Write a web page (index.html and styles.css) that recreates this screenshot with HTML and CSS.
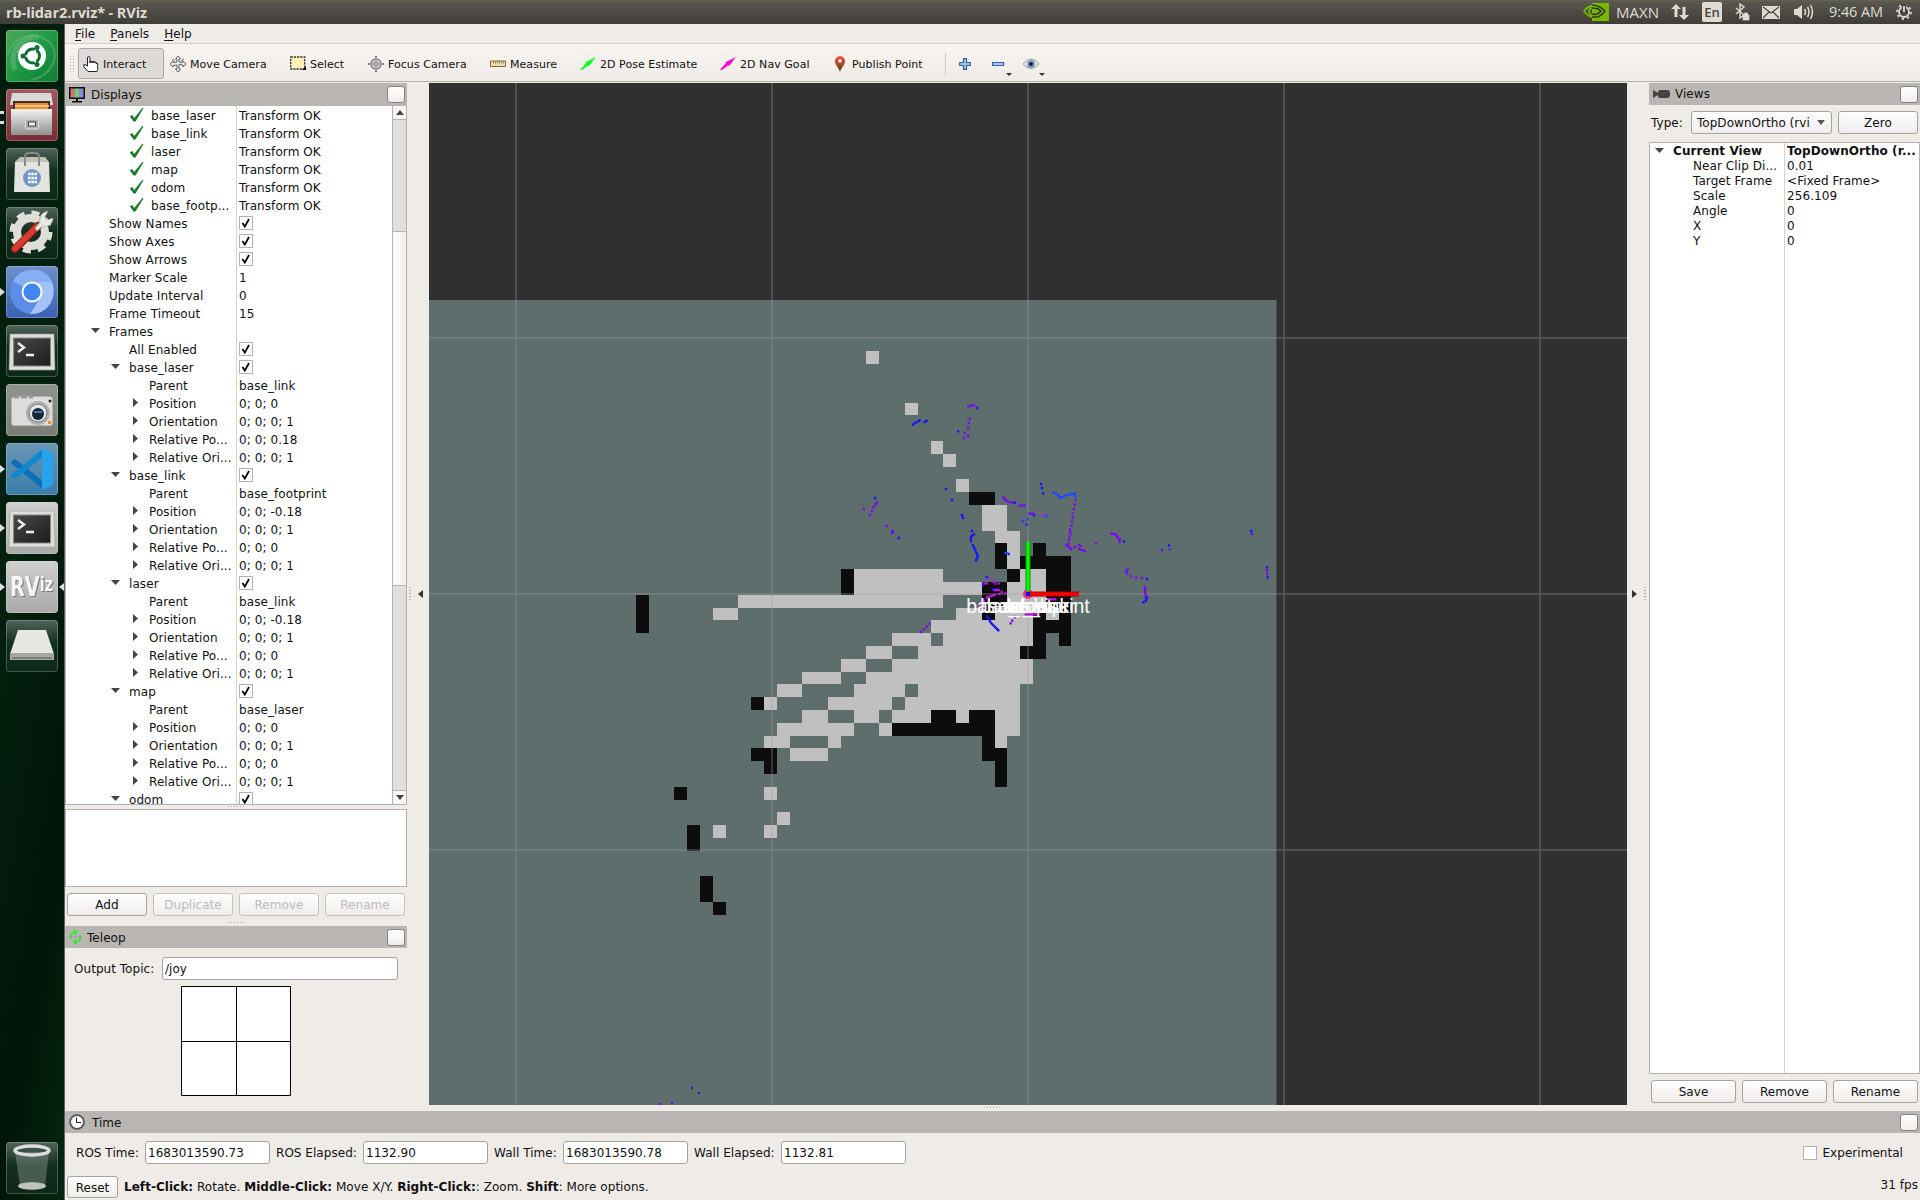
FILE: index.html
```html
<!DOCTYPE html>
<html lang="en">
<head>
<meta charset="utf-8">
<title>rb-lidar2.rviz* - RViz</title>
<link rel="stylesheet" href="styles.css">
</head>
<body>
<svg class="defs" width="0" height="0">
  <defs>
    <linearGradient id="silver" x1="0" y1="0" x2="0" y2="1"><stop offset="0" stop-color="#f2f2f0"/><stop offset="1" stop-color="#8f8f8d"/></linearGradient>
    <linearGradient id="screen" x1="0" y1="0" x2="1" y2="1"><stop offset="0" stop-color="#4a4a4a"/><stop offset="1" stop-color="#1c1c1c"/></linearGradient>
    <linearGradient id="pin" x1="0" y1="0" x2="0" y2="1"><stop offset="0" stop-color="#f0563a"/><stop offset="1" stop-color="#5a3a10"/></linearGradient>
    <symbol id="ck" viewBox="0 0 14 14"><rect x=".5" y=".5" width="13" height="13" fill="#fff" stroke="#b5b2ae"/><path d="M3.400 7l2.400 3.600L10 3" fill="none" stroke="#000" stroke-width="1.800"/></symbol>
    <symbol id="ok" viewBox="0 0 14 14"><path d="M.3 8.200l2.400-1.200 2 3L12.800 0 14 .3 6 13.500H4z" fill="#1c7a2a"/></symbol>
    <symbol id="dn" viewBox="0 0 10 6"><path d="M0 0h9L4.500 5z" fill="#444"/></symbol>
    <symbol id="rt" viewBox="0 0 6 10"><path d="M0 0l5 4.500L0 9z" fill="#444"/></symbol>
    <symbol id="term" viewBox="0 0 52 52"><path d="M4 9h44l1 36H3z" fill="#dcdcda" stroke="#9a9a98" stroke-width=".6"/><rect x="7.500" y="13" width="37" height="28" fill="url(#screen)" stroke="#888"/><path d="M12 18l6 4.500-6 4.500M20 30h8" fill="none" stroke="#eee" stroke-width="2.400"/></symbol>
  </defs>
</svg>

<header class="topbar">
  <span class="title">rb-lidar2.rviz* - RViz</span>
  <div class="tray">
    <svg class="nv" width="27" height="18" viewBox="0 0 27 18"><path d="M9 0h17v18H9z" fill="#76b900"/><path d="M1 8c5-7 15-7 20 0-5 8-15 8-20 0z" fill="none" stroke="#76b900" stroke-width="1.800"/><path d="M9 2c6 0 10 3 13 6-5 7-9 6-13 6M9 5c4 0 7 1 9 3-3 4-6 4-9 3" fill="none" stroke="#34381f" stroke-width="1.600"/><path d="M9 5C5 6 5 10 9 13M9 8c2-1 4 1 4 2" fill="none" stroke="#76b900" stroke-width="1.600"/></svg>
    <span class="maxn">MAXN</span>
    <svg class="net" width="18" height="16" viewBox="0 0 18 16"><path d="M5 0l5 5H6.500v8h-3V5H0zM13 16l-5-5h3.500V3h3v8H18z" fill="#dfdbd2"/></svg>
    <span class="en">En</span>
    <svg class="bt" width="15" height="18" viewBox="0 0 15 18"><path d="M1 5l8 7-4 3V1l4 3-8 7" fill="none" stroke="#dfdbd2" stroke-width="1.400"/><path d="M8 12h6v5H8zM9.500 12v-2h3v2" fill="#dfdbd2" stroke="#dfdbd2" stroke-width=".8"/></svg>
    <svg class="mail" width="18" height="13" viewBox="0 0 18 13"><path d="M0 0h18v13H0z" fill="#dfdbd2"/><path d="M1 1l8 6 8-6M1 12l6-6M17 12l-6-6" fill="none" stroke="#46443e" stroke-width="1.200"/></svg>
    <svg class="vol" width="20" height="16" viewBox="0 0 20 16"><path d="M0 5h3l5-4v14l-5-4H0z" fill="#dfdbd2"/><path d="M10.500 5q2 3 0 6M13.500 3q3 5 0 10M16.500 1q4 7 0 14" fill="none" stroke="#dfdbd2" stroke-width="1.500"/></svg>
    <span class="clock">9:46 AM</span>
    <svg class="gear" width="16" height="16" viewBox="0 0 16 16"><circle cx="8" cy="8" r="5" fill="none" stroke="#dfdbd2" stroke-width="1.800"/><circle cx="8" cy="8" r="7" fill="none" stroke="#dfdbd2" stroke-width="1.800" stroke-dasharray="2.200 3.300"/><path d="M8 0v8" stroke="#46443e" stroke-width="4"/><path d="M8 2v6" stroke="#dfdbd2" stroke-width="1.800"/></svg>
  </div>
</header>

<div class="desktop">
<nav class="launcher">
  <div class="tile green"><svg viewBox="0 0 52 52"><path d="M2 24C8 5 30 0 43 12s3 34-18 38" fill="none" stroke="#69bb77" stroke-width="2" opacity=".5"/><path d="M9 40C2 20 16 6 33 7" fill="none" stroke="#79c486" stroke-width="5" opacity=".4"/><circle cx="26" cy="26" r="14" fill="#fff"/><circle cx="26.500" cy="26" r="7" fill="none" stroke="#0c6e31" stroke-width="3"/><path d="M26 26L13 26M26 26l7-12M26 26l7 12" stroke="#fff" stroke-width="1.500"/><g fill="#0c6e31"><circle cx="17" cy="26" r="2.500"/><circle cx="31" cy="17.500" r="2.500"/><circle cx="31" cy="34.500" r="2.500"/></g></svg></div>
  <div class="tile red run2"><svg viewBox="0 0 52 52"><path d="M6 4h39l2 12H4z" fill="#d8d8d6"/><path d="M7 12h37v9H7z" fill="#403028"/><path d="M9 14h33v6H9z" fill="#f08a35"/><path d="M9 16h34v2H9z" fill="#fbc27b"/><path d="M5 20h41v26H5z" fill="url(#silver)"/><rect x="19.500" y="30" width="13" height="10" rx="2" fill="#aaa" stroke="#ddd"/><rect x="22.500" y="33" width="7" height="4" fill="#eee" stroke="#444"/></svg></div>
  <div class="tile dark"><svg viewBox="0 0 52 52"><path d="M9 14h34l1 30H8z" fill="#e4e4de"/><path d="M9 14l5-5h25l4 5z" fill="#c2c2bc"/><path d="M19 18V9q0-4 4-4h6q4 0 4 4v9" fill="none" stroke="#8b8b88" stroke-width="2"/><circle cx="26" cy="30" r="9" fill="#7298c9"/><path d="M22 26h9M22 30h9M22 34h9" stroke="#fff" stroke-width="2.500" stroke-dasharray="2.500 .8"/></svg></div>
  <div class="tile dark"><svg viewBox="0 0 52 52"><circle cx="25" cy="25" r="14" fill="none" stroke="#deded9" stroke-width="8"/><circle cx="25" cy="25" r="19" fill="none" stroke="#deded9" stroke-width="5" stroke-dasharray="8 6.900"/><path d="M9 42L32 19" stroke="#8a1e18" stroke-width="8" stroke-linecap="round"/><path d="M9 41.500L31 19.500" stroke="#d83b31" stroke-width="6" stroke-linecap="round"/><path d="M29 21l5-6c-1-7 3-10 8-11l-3 6 2 3 6-2c0 6-5 9-10 8l-6 5z" fill="#e8e8e4" stroke="#999" stroke-width=".6"/></svg></div>
  <div class="tile blue run"><svg viewBox="0 0 52 52"><circle cx="26" cy="26" r="22" fill="#5c8de8"/><path d="M26 26L7 15C16-1 40 0 46 16z" fill="#86aef5"/><path d="M26 16h20c6 16-5 33-22 32l12-19z" fill="#a5c2f7"/><circle cx="26" cy="26" r="10.500" fill="#fff"/><circle cx="26" cy="26" r="8.500" fill="#4285f4"/></svg></div>
  <div class="tile dark"><svg><use href="#term"/></svg></div>
  <div class="tile olive"><svg viewBox="0 0 52 52"><rect x="5" y="12" width="42" height="30" rx="3" fill="#dedddb" stroke="#888"/><path d="M7 13h20" stroke="#999" stroke-width="3" stroke-dasharray="6 2"/><circle cx="32" cy="29" r="12" fill="#b2b1ae"/><circle cx="32" cy="29" r="9" fill="#e3e3e3" stroke="#777"/><circle cx="32" cy="30" r="6" fill="#14263c"/><path d="M28 28h8" stroke="#48719d" stroke-width="2"/><path d="M42 37h3v3h-3z" fill="#f28c1c"/><circle cx="44" cy="17" r="1.500" fill="#222"/></svg></div>
  <div class="tile azure run"><svg viewBox="0 0 52 52"><path d="M5 19l4-3 29 23v8L5 20z" fill="#0a6eb9"/><path d="M5 33l4 3 29-23V5L5 32z" fill="#1385d1"/><path d="M36 5l11 5v32l-11 5z" fill="#27a3ee"/></svg></div>
  <div class="tile light run"><svg><use href="#term"/></svg></div>
  <div class="tile light run active"><svg viewBox="0 0 52 52"><text class="rviz-logo" x="4" y="35" textLength="43" lengthAdjust="spacingAndGlyphs"><tspan class="big">RV</tspan><tspan dy="-5">iz</tspan></text></svg></div>
  <div class="tile dark"><svg viewBox="0 0 52 52"><path d="M12 10h28l8 24H4z" fill="#e6e6e3"/><path d="M4 33h44v7H4z" fill="#a6a6a3"/><path d="M6 38h40" stroke="#555"/></svg></div>
  <div class="tile dark trash"><svg viewBox="0 0 52 52"><path d="M9 10l5 34q12 7 25 0l4-34z" fill="#aab5ac" opacity=".35"/><ellipse cx="26" cy="44" rx="14" ry="3.800" fill="#bfc2bf"/><ellipse cx="26" cy="8.500" rx="17" ry="4.500" fill="none" stroke="#dadcda" stroke-width="3.500"/></svg></div>
</nav>

<main class="window">
  <div class="menubar"><span><u>F</u>ile</span><span><u>P</u>anels</span><span><u>H</u>elp</span></div>
  <div class="toolbar">
    <i class="grip"></i>
    <div class="tool on"><svg viewBox="0 0 16 16"><path d="M4.500 10V2q0-1.500 1.200-1.500T7 2v5V5.500h2V7 5.500h2V7 6h2v1.500h1.700v5q0 2-.7 3H5L1 11q-1-3 1-2.500z" fill="#fff" stroke="#222"/></svg>Interact</div>
    <div class="tool t2"><svg viewBox="0 0 16 16"><path d="M8 0l2.500 3H9v3l4 .500V5l3 3-3 3V9l-4-.500V13h1.500L8 16l-2.500-3H7V9l-4 .500V11L0 8l3-3v1.500L7 6V3H5.500zM2 3l3 2M14 3l-3 2" fill="#eee" stroke="#555" stroke-width=".9"/></svg>Move Camera</div>
    <div class="tool t3"><svg viewBox="0 0 16 16"><rect x=".7" y="1" width="14" height="12" fill="#fff2b8" stroke="#333" stroke-width="1.300" stroke-dasharray="2.200 1"/><path d="M16 10v4h-4z"/></svg>Select</div>
    <div class="tool t4"><svg viewBox="0 0 16 16"><g fill="none" stroke="#777"><circle cx="8" cy="8" r="5" stroke-width="1.400"/><circle cx="8" cy="8" r="2.500"/><path d="M8 0v16M0 8h16" stroke-width="2"/></g><path d="M8 1v14M1 8h14" stroke="#eee" stroke-width=".7"/></svg>Focus Camera</div>
    <div class="tool t5"><svg viewBox="0 0 16 16"><path d="M.5 5h15v5.500H.5z" fill="#f2dfa0" stroke="#746a50"/><path d="M3.500 5.500v2M5.500 5.500v2M7.500 5.500v2M9.500 5.500v2M11.500 5.500v2M13.500 5.500v2" stroke="#746a50" stroke-width=".8"/></svg>Measure</div>
    <div class="tool t6"><svg viewBox="0 0 16 16"><path d="M0 14l6-7-1-.5L16 1 9 10l-1-.5L2 14z" fill="#0f2"/></svg>2D Pose Estimate</div>
    <div class="tool t7"><svg viewBox="0 0 16 16"><path d="M0 14l6-7-1-.5L16 1 9 10l-1-.5L2 14z" fill="#f0d"/></svg>2D Nav Goal</div>
    <div class="tool t8"><svg viewBox="0 0 16 16"><path d="M8 0a5 5 0 0 1 5 5.500C13 9 9 12 8 16 7 12 3 9 3 5.500A5 5 0 0 1 8 0z" fill="url(#pin)"/><circle cx="8" cy="5" r="1.700" fill="#fff"/></svg>Publish Point</div>
    <i class="sep"></i>
    <svg class="plus" width="12" height="12" viewBox="0 0 12 12"><path d="M4.500.7h3v3.800h3.800v3H7.500v3.800h-3V7.500H.7v-3h3.800z" fill="#a9c6ea" stroke="#2f63ab" stroke-width="1.200"/></svg>
    <svg class="minus" width="21" height="24" viewBox="0 0 21 24"><path d="M.6 9.500h11v3H.6z" fill="#a9c6ea" stroke="#2f63ab" stroke-width="1.200"/><path d="M14 20h6l-3 3z" fill="#333"/></svg>
    <svg class="eye" width="23" height="24" viewBox="0 0 23 24"><path d="M0 11q8-10 16 0-8 9-16 0z" fill="#ebe8e8" stroke="#999"/><circle cx="8" cy="11" r="3.800" fill="#6f87c8"/><circle cx="8" cy="11" r="1.700" fill="#111"/><path d="M16 20h6l-3 3z" fill="#333"/></svg>
  </div>

  <div class="middle">
    <section class="dock left">
      <div class="head"><svg width="16" height="16" viewBox="0 0 16 16"><path d="M0 0h16v12H0z" fill="#111"/><path d="M1.500 1.500h4.500v9H1.500z" fill="#c77"/><path d="M6 1.500h4v9H6z" fill="#7c7"/><path d="M10 1.500h4.500v9H10z" fill="#88d"/><path d="M7 12h2v2h4v1.500H3V14h4z" fill="#111"/></svg><b>Displays</b><i class="float"></i></div>
      <div class="treebox">
        <div class="tree">
          <div class="row d4"><span class="k"><svg class="st"><use href="#ok"/></svg>base_laser</span><span class="v">Transform OK</span></div>
          <div class="row d4"><span class="k"><svg class="st"><use href="#ok"/></svg>base_link</span><span class="v">Transform OK</span></div>
          <div class="row d4"><span class="k"><svg class="st"><use href="#ok"/></svg>laser</span><span class="v">Transform OK</span></div>
          <div class="row d4"><span class="k"><svg class="st"><use href="#ok"/></svg>map</span><span class="v">Transform OK</span></div>
          <div class="row d4"><span class="k"><svg class="st"><use href="#ok"/></svg>odom</span><span class="v">Transform OK</span></div>
          <div class="row d4"><span class="k"><svg class="st"><use href="#ok"/></svg>base_footp...</span><span class="v">Transform OK</span></div>
          <div class="row d1"><span class="k">Show Names</span><span class="v"><svg class="cb"><use href="#ck"/></svg></span></div>
          <div class="row d1"><span class="k">Show Axes</span><span class="v"><svg class="cb"><use href="#ck"/></svg></span></div>
          <div class="row d1"><span class="k">Show Arrows</span><span class="v"><svg class="cb"><use href="#ck"/></svg></span></div>
          <div class="row d1"><span class="k">Marker Scale</span><span class="v">1</span></div>
          <div class="row d1"><span class="k">Update Interval</span><span class="v">0</span></div>
          <div class="row d1"><span class="k">Frame Timeout</span><span class="v">15</span></div>
          <div class="row d1"><span class="k"><svg class="dn"><use href="#dn"/></svg>Frames</span><span class="v"></span></div>
          <div class="row d2"><span class="k">All Enabled</span><span class="v"><svg class="cb"><use href="#ck"/></svg></span></div>
          <div class="row d2"><span class="k"><svg class="dn"><use href="#dn"/></svg>base_laser</span><span class="v"><svg class="cb"><use href="#ck"/></svg></span></div>
          <div class="row d3"><span class="k">Parent</span><span class="v">base_link</span></div>
          <div class="row d3"><span class="k"><svg class="rt"><use href="#rt"/></svg>Position</span><span class="v">0; 0; 0</span></div>
          <div class="row d3"><span class="k"><svg class="rt"><use href="#rt"/></svg>Orientation</span><span class="v">0; 0; 0; 1</span></div>
          <div class="row d3"><span class="k"><svg class="rt"><use href="#rt"/></svg>Relative Po...</span><span class="v">0; 0; 0.18</span></div>
          <div class="row d3"><span class="k"><svg class="rt"><use href="#rt"/></svg>Relative Ori...</span><span class="v">0; 0; 0; 1</span></div>
          <div class="row d2"><span class="k"><svg class="dn"><use href="#dn"/></svg>base_link</span><span class="v"><svg class="cb"><use href="#ck"/></svg></span></div>
          <div class="row d3"><span class="k">Parent</span><span class="v">base_footprint</span></div>
          <div class="row d3"><span class="k"><svg class="rt"><use href="#rt"/></svg>Position</span><span class="v">0; 0; -0.18</span></div>
          <div class="row d3"><span class="k"><svg class="rt"><use href="#rt"/></svg>Orientation</span><span class="v">0; 0; 0; 1</span></div>
          <div class="row d3"><span class="k"><svg class="rt"><use href="#rt"/></svg>Relative Po...</span><span class="v">0; 0; 0</span></div>
          <div class="row d3"><span class="k"><svg class="rt"><use href="#rt"/></svg>Relative Ori...</span><span class="v">0; 0; 0; 1</span></div>
          <div class="row d2"><span class="k"><svg class="dn"><use href="#dn"/></svg>laser</span><span class="v"><svg class="cb"><use href="#ck"/></svg></span></div>
          <div class="row d3"><span class="k">Parent</span><span class="v">base_link</span></div>
          <div class="row d3"><span class="k"><svg class="rt"><use href="#rt"/></svg>Position</span><span class="v">0; 0; -0.18</span></div>
          <div class="row d3"><span class="k"><svg class="rt"><use href="#rt"/></svg>Orientation</span><span class="v">0; 0; 0; 1</span></div>
          <div class="row d3"><span class="k"><svg class="rt"><use href="#rt"/></svg>Relative Po...</span><span class="v">0; 0; 0</span></div>
          <div class="row d3"><span class="k"><svg class="rt"><use href="#rt"/></svg>Relative Ori...</span><span class="v">0; 0; 0; 1</span></div>
          <div class="row d2"><span class="k"><svg class="dn"><use href="#dn"/></svg>map</span><span class="v"><svg class="cb"><use href="#ck"/></svg></span></div>
          <div class="row d3"><span class="k">Parent</span><span class="v">base_laser</span></div>
          <div class="row d3"><span class="k"><svg class="rt"><use href="#rt"/></svg>Position</span><span class="v">0; 0; 0</span></div>
          <div class="row d3"><span class="k"><svg class="rt"><use href="#rt"/></svg>Orientation</span><span class="v">0; 0; 0; 1</span></div>
          <div class="row d3"><span class="k"><svg class="rt"><use href="#rt"/></svg>Relative Po...</span><span class="v">0; 0; 0</span></div>
          <div class="row d3"><span class="k"><svg class="rt"><use href="#rt"/></svg>Relative Ori...</span><span class="v">0; 0; 0; 1</span></div>
          <div class="row d2"><span class="k"><svg class="dn"><use href="#dn"/></svg>odom</span><span class="v"><svg class="cb"><use href="#ck"/></svg></span></div>
        </div>
        <div class="scroll">
          <div class="sbtn"><svg width="8" height="5"><path d="M0 5h8L4 0z" fill="#444"/></svg></div>
          <div class="thumb"></div>
          <div class="sbtn last"><svg width="8" height="5"><path d="M0 0h8L4 5z" fill="#444"/></svg></div>
        </div>
      </div>
      <i class="hdots"></i>
      <div class="desc"></div>
      <div class="btns"><span class="btn">Add</span><span class="btn off">Duplicate</span><span class="btn off">Remove</span><span class="btn off">Rename</span></div>
      <i class="hdots low"></i>
      <div class="head tele"><svg width="13" height="16" viewBox="0 0 13 16"><path d="M2 9.500Q.5 5 6 3M11 6.500q1.500 4.500-4 6.500" fill="none" stroke="#2e2" stroke-width="1.700"/><path d="M5 0l4.500 3L6 5.500zM8 16l-4.500-3L7 10.500z" fill="#2e2"/><path d="M0 8h13M6.500 4v8" stroke="#999" stroke-width=".6"/></svg><b>Teleop</b><i class="float"></i></div>
      <div class="topic"><label>Output Topic:</label><span class="input">/joy</span></div>
      <svg class="pad" width="110" height="110"><path d="M.5.5h109v109H.5zM55.500 0v110M0 55.500h110" fill="#fff" stroke="#000"/></svg>
    </section>

    <div class="handle"><i class="vdots"></i><svg width="5" height="8"><path d="M5 0v8L0 4z" fill="#333"/></svg></div>

    <svg class="view" width="1198" height="1022" viewBox="429 83 1198 1022">
      <path d="M429 83h1198v1022H429z" fill="#303030"/>
      <path d="M429 300h847.500v805H429z" fill="#5e6e6d"/>
      <g transform="translate(636 594.700) scale(12.805)" shape-rendering="crispEdges">
        <path fill="#c0c0c0" d="M18-19h1v1h-1zM21-15h1v1h-1zM23-12h1v1h-1zM24-11h1v1h-1zM25-9h1v1h-1zM27-7h2v2h-2zM28-5h2v1h-2zM29-4h1v2h-1zM17-2h7v1h-7zM30-2h2v1h-2zM17-1h10v1h-10zM29-1h3v2h-3zM8 0h16v1h-16zM6 1h2v1h-2zM25 1h2v1h-2zM28 1h3v1h-3zM32 1h1v1h-1zM23 2h8v1h-8zM20 3h3v1h-3zM24 3h7v1h-7zM18 4h2v1h-2zM22 4h8v1h-8zM16 5h2v1h-2zM20 5h11v1h-11zM13 6h3v1h-3zM18 6h13v1h-13zM11 7h2v1h-2zM17 7h4v1h-4zM22 7h8v1h-8zM10 8h1v1h-1zM15 8h5v1h-5zM21 8h9v1h-9zM13 9h2v1h-2zM17 9h2v1h-2zM20 9h3v1h-3zM25 9h1v1h-1zM28 9h2v2h-2zM11 10h6v1h-6zM19 10h1v1h-1zM10 11h2v1h-2zM15 11h1v1h-1zM28 11h1v1h-1zM12 12h3v1h-3zM10 15h1v1h-1zM11 17h1v1h-1zM6 18h1v1h-1zM10 18h1v1h-1z"/>
        <path fill="#0d0d0d" d="M26-8h2v1h-2zM28-4h1v2h-1zM31-4h1v1h-1zM30-3h4v1h-4zM16-2h1v2h-1zM29-2h1v1h-1zM32-2h2v3h-2zM27-1h2v2h-2zM0 0h1v3h-1zM27 1h1v1h-1zM31 1h1v1h-1zM33 1h1v1h-1zM31 2h3v1h-3zM31 3h1v1h-1zM33 3h1v1h-1zM30 4h2v1h-2zM9 8h1v1h-1zM23 9h2v1h-2zM26 9h2v1h-2zM20 10h8v1h-8zM27 11h1v2h-1zM9 12h2v1h-2zM28 12h1v3h-1zM10 13h1v1h-1zM3 15h1v1h-1zM4 18h1v2h-1zM5 22h1v2h-1zM6 24h1v1h-1z"/>
      </g>
      <path d="M516 83v1022M772 83v1022M1028 83v1022M1284 83v1022M1540 83v1022M429 338h1198M429 594h1198M429 850h1198" stroke="#a4a0a4" stroke-opacity=".29" stroke-width="2" fill="none"/>
      <g transform="translate(820 340) scale(.33333)" fill="none" stroke-width="7" stroke-linecap="square">
        <path stroke="#7a08f4" d="M445 199h4M455 196h7M450 237h0M446 249h0M444 264h0M434 279h0M432 294h0M444 288h0M132 507h0M171 487l-5 8M160 502h0M156 513h0M150 525h0M200 558h0M219 573h0M550 473l8 7M564 485h0M573 487h8M600 497h14M627 521h12M609 543h0M767 479h0M764 494h0M762 507h0M758 520h0M759 532h0M756 545h0M754 557h0M750 568v6M753 581h0M749 590h0M747 599h0M746 610h0M739 615l15 12M765 621h0M776 615l6 3M777 627l18 6M828 611h0M874 581l12 2M890 588l6 7M899 598v8M923 687l-5 8M922 701h0M933 709h0M948 713h0M966 714h0M975 742v19M978 766v8M1026 630h0M1296 582h0M1049 628h0M1341 690h0M1342 702h0M329 852h0M320 860h0M311 868h0M302 876h0M585 831h0M577 842h0M572 850h0"/>
        <path stroke="#c210ee" d="M668 526h6M506 714h0M492 730h9M519 725h0M526 731h0M536 730h0M522 750h14M545 756h0M556 760h0M500 772l24-7M538 762h0M492 782h0M482 793v10M505 780h0M684 778h22M617 823h31M655 815h0M662 807h8"/>
        <path stroke="#1616ff" d="M471 204h0M279 254l8-6M294 245l5-4M314 246l6-4M415 274h0M378 447h0M396 480h0M426 525l3 9M165 474h0M216 578h0M236 594h0M663 432h0M666 444h0M669 461h0M585 489h0M642 526h0M620 554h0M456 573h0M462 583l-9 7v13M459 615l6 14M468 636l6 14-6 11M912 605h0M1047 616h0M1294 573h0M981 717h0M981 773l-3 10-8 4M1341 682h0M1343 712h0M501 830l13 20 21 21M500 711h0M489 735h0M519 748h0M566 642h0"/>
        <path stroke="#184cff" d="M700 457l14 7 6 11 17-8 16-5h13v6M557 639h3M680 528h0M623 537h0"/>
      </g>
      <path d="M691 1087h2v2h-2zM698 1092h2v2h-2z" fill="#2b0cff"/><path d="M659 1103h2v2h-2zM671 1102h2v2h-2z" fill="#6f12ff"/>
      <circle cx="1027.800" cy="594" r="4.800" fill="#ed2b7c"/>
      <path d="M1025.500 542h5v49h-5z" fill="#0a970a"/><path d="M1026.500 542h3v49h-3z" fill="#00ff00"/>
      <path d="M1030 591.500h49v5h-49z" fill="#b00000"/><path d="M1030 592.500h49v3h-49z" fill="#f00"/>
      <path d="M1026 592h4v4h-4z" fill="#1600ff"/>
      <g class="labels"><text x="1028" y="613">base_footprint</text><text x="1028" y="613">base_laser</text><text x="1028" y="613">base_link</text><text x="1028" y="613">laser</text><text x="1028" y="613">map</text><text x="1028" y="613">odom</text></g>
    </svg>

    <div class="handle r"><svg width="5" height="8"><path d="M0 0v8l5-4z" fill="#333"/></svg><i class="vdots"></i></div>

    <section class="dock right">
      <div class="head"><svg width="17" height="10" viewBox="0 0 17 10"><path d="M0 1l5 3V3q0-2 3-2h6q3 0 3 3v2q0 3-3 3H8Q5 9 5 7V6L0 9z" fill="#444"/></svg><b>Views</b><i class="float"></i></div>
      <div class="typerow"><label>Type:</label><span class="combo">TopDownOrtho (rvi<svg width="8" height="5"><path d="M0 0h8L4 5z" fill="#555"/></svg></span><span class="btn zero">Zero</span></div>
      <div class="vtree">
        <div class="vr top"><span class="vk"><svg class="dn"><use href="#dn"/></svg>Current View</span><span>TopDownOrtho (r...</span></div>
        <div class="vr"><span class="vk">Near Clip Di...</span><span>0.01</span></div>
        <div class="vr"><span class="vk">Target Frame</span><span>&lt;Fixed Frame&gt;</span></div>
        <div class="vr"><span class="vk">Scale</span><span>256.109</span></div>
        <div class="vr"><span class="vk">Angle</span><span>0</span></div>
        <div class="vr"><span class="vk">X</span><span>0</span></div>
        <div class="vr"><span class="vk">Y</span><span>0</span></div>
      </div>
      <div class="btns"><span class="btn">Save</span><span class="btn">Remove</span><span class="btn">Rename</span></div>
    </section>
  </div>

  <div class="split"><i class="hdots"></i></div>
  <div class="head time"><svg width="16" height="16" viewBox="0 0 16 16"><circle cx="8" cy="8" r="6.900" fill="#fff" stroke="#555" stroke-width="1.800"/><path d="M7.500 3.500v5H12" fill="none" stroke="#222"/></svg><b>Time</b><i class="float"></i></div>
  <div class="fields">
    <label>ROS Time:</label><span class="input">1683013590.73</span>
    <label class="wide">ROS Elapsed:</label><span class="input">1132.90</span>
    <label>Wall Time:</label><span class="input">1683013590.78</span>
    <label class="wide">Wall Elapsed:</label><span class="input">1132.81</span>
    <span class="exp"><i class="box"></i>Experimental</span>
  </div>
  <div class="status"><span class="btn reset">Reset</span><span class="hint"><b>Left-Click:</b> Rotate. <b>Middle-Click:</b> Move X/Y. <b>Right-Click:</b>: Zoom. <b>Shift</b>: More options.</span><span class="fps">31 fps</span></div>
</main>
</div>
</body>
</html>
```
FILE: styles.css
```css
* { box-sizing: border-box; }
body { margin: 0; width: 1920px; height: 1200px; overflow: hidden; background: #efebe7; color: #111; font: 12px/18px "DejaVu Sans", sans-serif; letter-spacing: .04px; }
svg { display: block; flex: none; }
i { font-style: normal; }
.defs { position: absolute; }

.topbar { height: 24px; display: flex; align-items: center; justify-content: space-between; padding: 0 8px 0 6px; background: linear-gradient(#65634f 0, #59574e 2px, #3e3d38); color: #dfdbd2; font-family: "Open Sans", sans-serif; }
.title { font-size: 14.500px; font-weight: 700; letter-spacing: -.1px; padding-top: 1px; }
.tray { display: flex; align-items: center; font-size: 15px; }
.maxn { width: 43px; margin: 0 12px 0 6px; }
.en { width: 20px; height: 20px; margin: 0 13px 0 13px; border-radius: 2px; background: #dfdbd2; color: #46443e; font-size: 13px; font-weight: 600; line-height: 20px; text-align: center; }
.mail { margin: 0 14px 0 12px; }
.clock { width: 54px; margin: 0 13px 0 15px; font-size: 14.500px; white-space: nowrap; letter-spacing: -.1px; }

.desktop { display: flex; height: 1176px; }
.launcher { width: 65px; padding: 6px 0 6px 6px; border-right: 1px solid #5d6660; background: linear-gradient(100deg, #021d0d, #04200f 40%, #01150a 75%, #05270f); display: flex; flex-direction: column; gap: 7px; }
.tile { position: relative; width: 52px; height: 52px; border-radius: 4px; box-shadow: inset 0 0 0 1px rgba(255,255,255,.22); }
.tile svg { width: 52px; height: 52px; }
.trash { margin-top: auto; }
.green { background: linear-gradient(135deg, #4fa75e, #1c9a44 50%, #137a35); }
.red { background: linear-gradient(#9f5a5e, #7b2b35); }
.dark { background: linear-gradient(#50635a, #12301f 45%, #0b2818); }
.blue { background: linear-gradient(#6f8fc9, #3a62b4); }
.olive { background: linear-gradient(#8f958c, #777d74); }
.azure { background: linear-gradient(#6b96b5, #3a7caa); }
.light { background: linear-gradient(#cfcfcf, #a9a9a9); }
.run::before { content: ""; position: absolute; left: -6px; top: 22px; border: 4px solid transparent; border-left: 5px solid #ddd; border-right: 0; }
.run2::before { content: ""; position: absolute; left: -6px; top: 22px; width: 4px; height: 7px; border: solid #ddd; border-width: 3px 0; }
.active::after { content: ""; position: absolute; right: -6px; top: 22px; border: 4px solid transparent; border-right: 5px solid #ddd; border-left: 0; }
.rviz-logo { font: bold 20px "DejaVu Sans", sans-serif; fill: #f6f6f6; filter: drop-shadow(1px 1px 0 #777); }
.rviz-logo .big { font-size: 27px; }

.window { width: 1855px; display: flex; flex-direction: column; }
.menubar { height: 20px; display: flex; gap: 15px; padding: 1px 0 0 10px; border-bottom: 1px solid #d2cfcb; }
u { text-underline-offset: 2px; }
.toolbar { display: flex; align-items: center; height: 38px; margin-bottom: 1px; padding: 2px 0 0 4px; font-size: 11px; letter-spacing: .05px; background: linear-gradient(#f8f5f1, #efebe6); border-bottom: 1px solid #b4b1ad; }
.grip { width: 5px; height: 17px; margin-right: 4px; background: radial-gradient(circle, #aaa 0 .7px, transparent 1px) 0 0 / 3px 3px; }
.tool { display: flex; align-items: center; gap: 4px; white-space: nowrap; line-height: 16px; padding-top: 2px; }
.tool svg { width: 16px; height: 16px; margin-top: -2px; }
.on { width: 86px; height: 31px; padding-left: 4px; border: 1px solid #aaa7a3; border-radius: 3px; background: #dddad7; }
.t2 { width: 120px; margin-left: 6px; }
.t3 { width: 78px; } .t4 { width: 122px; } .t5 { width: 90px; } .t6 { width: 140px; } .t7 { width: 112px; } .t8 { width: 113px; }
.sep { width: 1px; height: 22px; background: #ccc9c5; }
.plus { margin: 0 21px 0 13px; }
.minus { margin-top: 2px; }
.eye { margin: 2px 0 0 10px; }

.middle { height: 1022px; display: flex; }
.dock { display: flex; flex-direction: column; }
.left { width: 342px; }
.right { width: 271px; }
.head { height: 22px; flex: none; display: flex; align-items: center; padding: 0 2px 0 4px; background: #b9b5b2; }
.head b { margin-left: 6px; font-weight: 400; }
.float { margin-left: auto; width: 18px; height: 17px; border: 1px solid #858280; border-radius: 3px; background: linear-gradient(#fff, #efedeb); }
.left > .head:first-child { height: 23px; }
.treebox { height: 699px; display: flex; border: 1px solid #b5b2ae; border-top: 0; background: #fff; overflow: hidden; letter-spacing: .08px; }
.tree { flex: 1; overflow: hidden; }
.row { height: 18px; display: flex; line-height: 21px; white-space: nowrap; }
.k { width: 171px; flex: none; border-right: 1px solid #d5d3d1; position: relative; }
.v { padding: 0 0 0 2px; }
.d1 .k { padding-left: 43px; } .d2 .k { padding-left: 63px; } .d3 .k { padding-left: 83px; }
.d4 .k { padding-left: 63px; display: flex; align-items: flex-start; gap: 7px; }
.st { width: 15px; height: 14px; margin-top: 2px; }
.cb { width: 14px; height: 14px; margin-top: 2px; }
.k .dn { float: left; width: 10px; height: 6px; margin: 6px 0 0 -18px; }
.k .rt { float: left; width: 6px; height: 10px; margin: 4px 0 0 -16px; }
.scroll { width: 14px; border-left: 1px solid #b5b2ae; background: #e0dfdb; display: flex; flex-direction: column; }
.sbtn { height: 14px; display: flex; align-items: center; justify-content: center; background: #f8f7f5; border-bottom: 1px solid #b5b2ae; }
.sbtn.last { margin-top: auto; border-bottom: 0; border-top: 1px solid #b5b2ae; }
.thumb { margin-top: 111px; height: 355px; border: solid #b5b2ae; border-width: 1px 0; background: linear-gradient(90deg, #fefefe, #efedea); }
.hdots { width: 17px; height: 1px; margin: 1px auto 2px; align-self: center; background: repeating-linear-gradient(90deg, #b0adaa 0 1px, transparent 1px 3px); }
.hdots.low { margin: 6px auto 3px; }
.desc { height: 78px; border: 1px solid #b5b2ae; background: #fff; }
.btns { display: flex; gap: 6px; margin: 6px 2px 0; }
.btn { flex: 1; height: 23px; border: 1px solid #a5a29f; border-radius: 3px; background: linear-gradient(#fefefe, #efedeb); line-height: 22px; text-align: center; }
.off { color: #bdbab7; border-color: #c5c2bf; }
.tele b, .time b { margin-left: 5px; padding-top: 1px; }
.topic { display: flex; align-items: center; margin: 9px 9px 6px; }
.topic label { width: 88px; }
.input { height: 23px; border: 1px solid #a5a29f; border-radius: 3px; background: #fff; padding-left: 2px; line-height: 22px; }
.topic .input { flex: 1; }
.pad { margin-left: 116px; }
.handle { width: 22px; display: flex; align-items: center; padding-left: 2px; gap: 7px; }
.handle.r { padding: 0 2px 0 5px; }
.vdots { width: 2px; height: 15px; background: repeating-linear-gradient(#b0adaa 0 1px, transparent 1px 3px); }
.labels { font: 19.500px "Liberation Sans", sans-serif; fill: #fff; text-anchor: middle; letter-spacing: 0; }
.right .head b { margin-left: 5px; }
.typerow { display: flex; align-items: center; margin: 6px 2px 8px; }
.typerow label { width: 40px; }
.combo { width: 141px; height: 23px; margin-right: 6px; padding: 0 6px 0 5px; display: flex; align-items: center; justify-content: space-between; border: 1px solid #a5a29f; border-radius: 3px; background: linear-gradient(#fefefe, #efedeb); white-space: nowrap; }
.vtree { height: 932px; border: 1px solid #b5b2ae; background: linear-gradient(90deg, transparent 134px, #d5d3d1 134px 135px, transparent 135px) #fff; letter-spacing: .08px; }
.vr { height: 15px; display: flex; line-height: 16px; white-space: nowrap; }
.vk { width: 137px; flex: none; padding-left: 43px; }
.top { font-weight: 700; }
.top .vk { padding-left: 23px; }
.top .dn { float: left; width: 10px; height: 6px; margin: 5px 0 0 -18px; }

.split { height: 6px; display: flex; }
.time b { margin-left: 7px; }
.fields { display: flex; align-items: center; height: 23px; margin-top: 8px; padding-left: 11px; }
.fields label { width: 69px; white-space: nowrap; padding-top: 1px; }
.fields .wide { width: 87px; }
.fields .input { width: 125px; margin-right: 6px; }
.exp { margin: 0 17px 0 auto; display: flex; align-items: center; gap: 5px; }
.box { width: 14px; height: 14px; border: 1px solid #b5b2ae; background: #fff; }
.status { display: flex; margin: 12px 2px 0; }
.reset { flex: none; width: 51px; height: 22px; line-height: 22px; }
.hint { margin: 2px 0 0 6px; }
.fps { margin: 0 0 0 auto; }
```
